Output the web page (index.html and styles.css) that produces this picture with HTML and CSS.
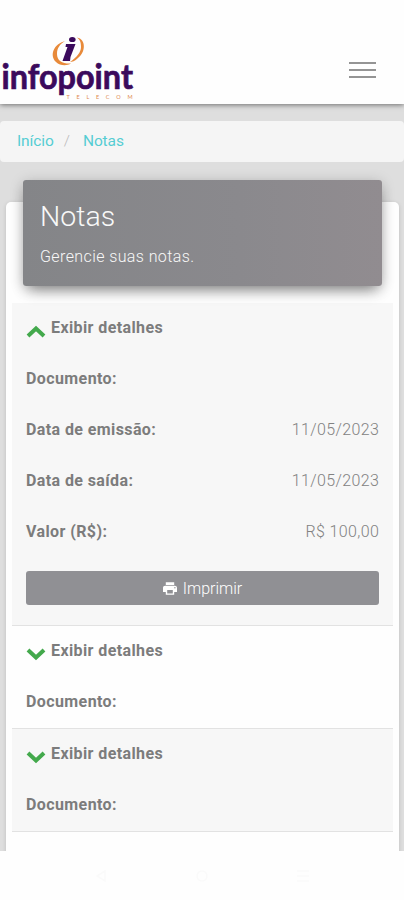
FILE: index.html
```html
<!DOCTYPE html>
<html lang="pt-BR">
<head>
<meta charset="utf-8">
<title>Notas</title>
<link rel="stylesheet" href="styles.css">
</head>
<body>
<div class="app">
  <header class="navbar">
    <svg class="logo" width="140" height="70" viewBox="0 0 140 70" role="img" aria-label="infopoint telecom">
      <g fill="#e88a3a">
        <path d="M65 7C54 10 49 21 56 28C60 32 67 32 71 29.500C63 30 57 27 57 20C57 14 60 10 65 7Z"/>
        <path d="M77 3.500C86 5 86 18 78 24C75 27 72 28 70 28C77 23 81 18 81 13C81 8 80 6 77 3.500Z"/>
      </g>
      <g fill="#3b0a5c">
        <ellipse cx="72.300" cy="5.500" rx="3.300" ry="2.600"/>
        <path d="M66 10H75.500L70.500 23L70 27H62.500L67.500 13L65.500 13Z"/>
      </g>
      <text class="brand" x="1.500" y="54.500" textLength="131.500" lengthAdjust="spacingAndGlyphs">infopoint</text>
      <text class="tag" x="66.500" y="64.500" textLength="66" lengthAdjust="spacing">TELECOM</text>
    </svg>
    <div class="menu"><i></i><i></i><i></i></div>
  </header>
  <nav class="crumbs"><a>Início</a><span>/</span><a>Notas</a></nav>
  <main class="card">
    <div class="card-head"><h1>Notas</h1><p>Gerencie suas notas.</p></div>
    <section class="item odd">
      <div class="line"><svg class="chev" width="20" height="13" viewBox="0 0 20 13"><path d="M2 11L10 3.500L18 11"/></svg><b>Exibir detalhes</b></div>
      <div class="line"><b>Documento:</b></div>
      <div class="line"><b>Data de emissão:</b><span class="val">11/05/2023</span></div>
      <div class="line"><b>Data de saída:</b><span class="val">11/05/2023</span></div>
      <div class="line"><b>Valor (R$):</b><span class="val">R$ 100,00</span></div>
      <div class="btn"><svg width="14" height="13" viewBox="2 3 20 18"><path fill="#fff" d="M19 8H5c-1.660 0-3 1.340-3 3v6h4v4h12v-4h4v-6c0-1.660-1.340-3-3-3zm-3 11H8v-5h8v5zm3-7c-.55 0-1-.45-1-1s.45-1 1-1 1 .45 1 1-.45 1-1 1zm-1-9H6v4h12V3z"/></svg><span>Imprimir</span></div>
    </section>
    <section class="item">
      <div class="line"><svg class="chev" width="20" height="13" viewBox="0 0 20 13"><path d="M2 2L10 9.500L18 2"/></svg><b>Exibir detalhes</b></div>
      <div class="line"><b>Documento:</b></div>
    </section>
    <section class="item odd">
      <div class="line"><svg class="chev" width="20" height="13" viewBox="0 0 20 13"><path d="M2 2L10 9.500L18 2"/></svg><b>Exibir detalhes</b></div>
      <div class="line"><b>Documento:</b></div>
    </section>
  </main>
</div>
<footer class="sysbar">
  <svg width="16" height="16" viewBox="0 0 16 16"><path d="M12 3L4 8L12 13Z"/></svg>
  <svg width="16" height="16" viewBox="0 0 16 16"><circle cx="8" cy="8" r="5"/></svg>
  <svg width="16" height="16" viewBox="0 0 16 16"><path d="M2 3H14M2 8H14M2 13H14"/></svg>
</footer>
</body>
</html>
```
FILE: styles.css
```css
* { box-sizing: border-box; }
body { margin: 0; background: #fefefe; font-family: Roboto, sans-serif; font-size: 16px; color: #7c7c7c; }
.app { height: 851px; background: #dedede; overflow: hidden; }
.navbar { height: 104px; padding: 34px 28px 0 0; background: #fefefe; display: flex; justify-content: space-between; align-items: flex-start; box-shadow: 0 1px 5px rgba(0,0,0,.5); }
.logo { display: block; overflow: visible; }
.brand { font: 700 34px Lato, sans-serif; fill: #3b0a5c; stroke: #3b0a5c; stroke-width: .7px; font-variant-ligatures: none; }
.tag { font: 5.5px Lato, sans-serif; fill: #e08a50; }
.menu { display: flex; flex-direction: column; gap: 5px; margin-top: 28px; width: 27px; }
.menu i { height: 2px; background: #949494; }
.crumbs { height: 41px; margin-top: 17px; padding: 0 17px 1px; background: #f5f5f5; border-radius: 4px; display: flex; align-items: center; font-size: 15.5px; }
.crumbs a { color: #55cdd3; letter-spacing: -.1px; }
.crumbs span { color: #bbb; margin: 0 13px 0 10px; font-weight: 300; }
.card { height: 720px; margin: 40px 5px 0 6px; padding: 0 6px; background: #fefefe; border-radius: 5px; box-shadow: 0 1px 4px rgba(0,0,0,.14); }
.card-head { position: relative; top: -22px; height: 106px; margin: 0 11px -5px; padding: 21px 17px 0; border-radius: 3px; color: #f8f8f8; background: linear-gradient(90deg, #848588, #8a898d 60%, #918c90); box-shadow: 0 8px 14px -5px rgba(0,0,0,.45), 0 2px 14px rgba(0,0,0,.18); }
.card-head h1 { margin: 0; font-size: 28.5px; line-height: 32px; font-weight: 300; }
.card-head p { margin: 14px 0 0; font-size: 16px; line-height: 20px; font-weight: 300; letter-spacing: .4px; }
.item { padding: 0 14px; border-bottom: 1px solid #e2e2e2; }
.item.odd { background: #f7f7f7; }
.line { height: 51px; padding-bottom: 2px; display: flex; align-items: center; }
.line b { font-weight: 700; letter-spacing: .4px; }
.chev { margin: 8px 5px 0 0; fill: none; stroke: #43a94c; stroke-width: 4; flex: none; }
.val { margin-left: auto; margin-right: -.4px; font-weight: 300; letter-spacing: .4px; color: #828282; }
.btn { height: 34px; margin-top: 13px; border-radius: 3px; background: #909094; color: #fff; font-weight: 300; display: flex; align-items: center; justify-content: center; gap: 6px; }
.item:has(.btn) { height: 323px; }
.sysbar { height: 49px; display: flex; justify-content: center; align-items: center; gap: 85px; }
.sysbar svg { fill: none; stroke: #fafafa; stroke-width: 1.5; }
```
